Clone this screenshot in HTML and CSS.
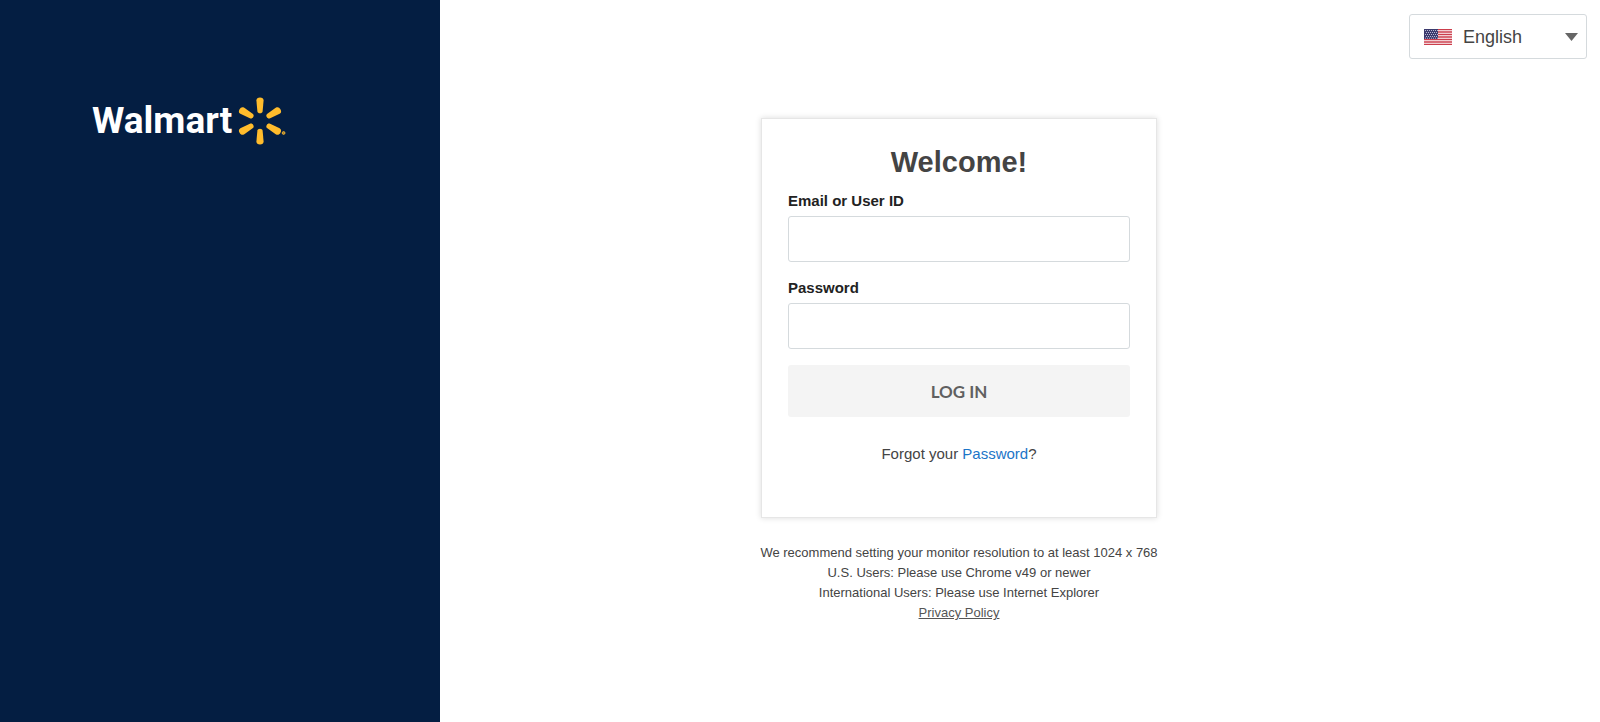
FILE: index.html
```html
<!DOCTYPE html>
<html lang="en">
<head>
    <meta charset="UTF-8">
    <meta name="viewport" content="width=device-width, initial-scale=1.0">
    <title>Walmart Login</title>
    <link rel="stylesheet" href="styles.css">
</head>
<body>
    <aside class="sidebar">
        <div class="logo">
            <span class="logo-text">Walmart</span>
            <svg class="logo-spark" width="50" height="48" viewBox="-24 -24 50 48" fill="#ffbc2c" aria-hidden="true">
                <defs>
                    <path id="ray" d="M-3.6 -20.6C-3.6 -22.6 -2.2 -23.6 0 -23.6S3.6 -22.6 3.6 -20.6L2.6 -9.6C2.4 -8.5 1.4 -7.8 0 -7.8S-2.4 -8.5 -2.6 -9.6Z"/>
                </defs>
                <use href="#ray"/>
                <use href="#ray" transform="rotate(60)"/>
                <use href="#ray" transform="rotate(120)"/>
                <use href="#ray" transform="rotate(180)"/>
                <use href="#ray" transform="rotate(240)"/>
                <use href="#ray" transform="rotate(300)"/>
                <circle cx="23.6" cy="12" r="1.4" fill="#a57f33" stroke="#ffbc2c" stroke-width=".8"/>
            </svg>
        </div>
    </aside>
    <main class="main">
        <div class="topbar">
            <div class="language">
                <svg class="flag" width="28" height="16" viewBox="0 0 28 16" aria-hidden="true">
                    <rect width="28" height="16" fill="#fff"/>
                    <path d="M0 .5h28M0 3h28M0 5.5h28M0 8h28M0 10.5h28M0 13h28M0 15.5h28" stroke="#cb3e4c" stroke-width="1.3"/>
                    <rect width="14" height="10" fill="#3c3b6e"/>
                    <path d="M1 1.5h13M2 3.5h12M1 5.5h13M2 7.5h12M1 9.2h13" stroke="#b9b9d2" stroke-dasharray="1 1"/>
                </svg>
                <select class="language-select" aria-label="Language">
                    <option>English</option>
                </select>
                <svg class="arrow" width="13" height="8" viewBox="0 0 13 8" aria-hidden="true">
                    <path d="M0 0h13L6.5 8z" fill="#666"/>
                </svg>
            </div>
        </div>
        <div class="content">
            <form class="card">
                <h1>Welcome!</h1>
                <label for="userId">Email or User ID</label>
                <input type="text" id="userId">
                <label for="password">Password</label>
                <input type="password" id="password">
                <button type="button">LOG IN</button>
                <p class="forgot">Forgot your <a href="#">Password</a>?</p>
            </form>
            <div class="notes">
                <p>We recommend setting your monitor resolution to at least 1024 x 768</p>
                <p>U.S. Users: Please use Chrome v49 or newer</p>
                <p>International Users: Please use Internet Explorer</p>
                <p><a href="#">Privacy Policy</a></p>
            </div>
        </div>
    </main>
</body>
</html>
```
FILE: styles.css
```css
* {
    box-sizing: border-box;
}
body {
    display: flex;
    min-height: 100vh;
    margin: 0;
    font-family: "Liberation Sans", Arial, sans-serif;
    color: #444;
    background-color: #fff;
}
.sidebar {
    width: 27.5%;
    padding: 97px 92px;
    background-color: #041e42;
}
.logo {
    display: flex;
    align-items: center;
    gap: 4px;
}
.logo-text {
    font-family: Roboto, "Open Sans", sans-serif;
    font-size: 37px;
    font-weight: 700;
    line-height: 48px;
    color: #fff;
}
.logo-spark {
    flex: none;
}
.main {
    flex: 1;
}
.topbar {
    display: flex;
    justify-content: flex-end;
    padding: 14px 13px 0;
}
.language {
    display: flex;
    align-items: center;
    position: relative;
    width: 178px;
    height: 45px;
    border: 1px solid #d5dadd;
    border-radius: 3px;
}
.flag {
    position: absolute;
    left: 14px;
    pointer-events: none;
}
.language-select {
    width: 100%;
    height: 100%;
    padding: 0 32px 0 53px;
    border: none;
    background: none;
    appearance: none;
    font-family: inherit;
    font-size: 18px;
    color: #444;
}
.arrow {
    position: absolute;
    right: 8px;
    pointer-events: none;
}
.content {
    display: flex;
    flex-direction: column;
    align-items: center;
    padding: 59px 122px 40px 0;
}
.card {
    width: 396px;
    padding: 26px 26px 52px;
    border: 1px solid #e6e6e6;
    box-shadow: 0 0 6px rgba(0, 0, 0, 0.14);
}
h1 {
    margin: 0 0 12px;
    font-size: 29px;
    line-height: 34px;
    text-align: center;
}
label {
    display: block;
    margin-bottom: 5px;
    font-size: 15px;
    font-weight: bold;
    line-height: 20px;
    color: #222;
}
input {
    display: block;
    width: 100%;
    height: 46px;
    margin-bottom: 16px;
    padding: 0 12px;
    border: 1px solid #d5dadd;
    border-radius: 3px;
    font-size: 16px;
}
button {
    display: block;
    width: 100%;
    height: 52px;
    border: none;
    border-radius: 3px;
    background-color: #f4f4f4;
    font-family: Lato, sans-serif;
    font-size: 17px;
    font-weight: 700;
    color: #606060;
    cursor: pointer;
}
.forgot {
    margin: 26px 0 0;
    font-size: 15px;
    line-height: 22px;
    text-align: center;
}
.forgot a {
    color: #1b75c8;
    text-decoration: none;
}
.notes {
    margin-top: 25px;
    font-size: 13px;
    line-height: 20px;
    text-align: center;
}
.notes p {
    margin: 0;
}
.notes a {
    color: #555;
}
```
